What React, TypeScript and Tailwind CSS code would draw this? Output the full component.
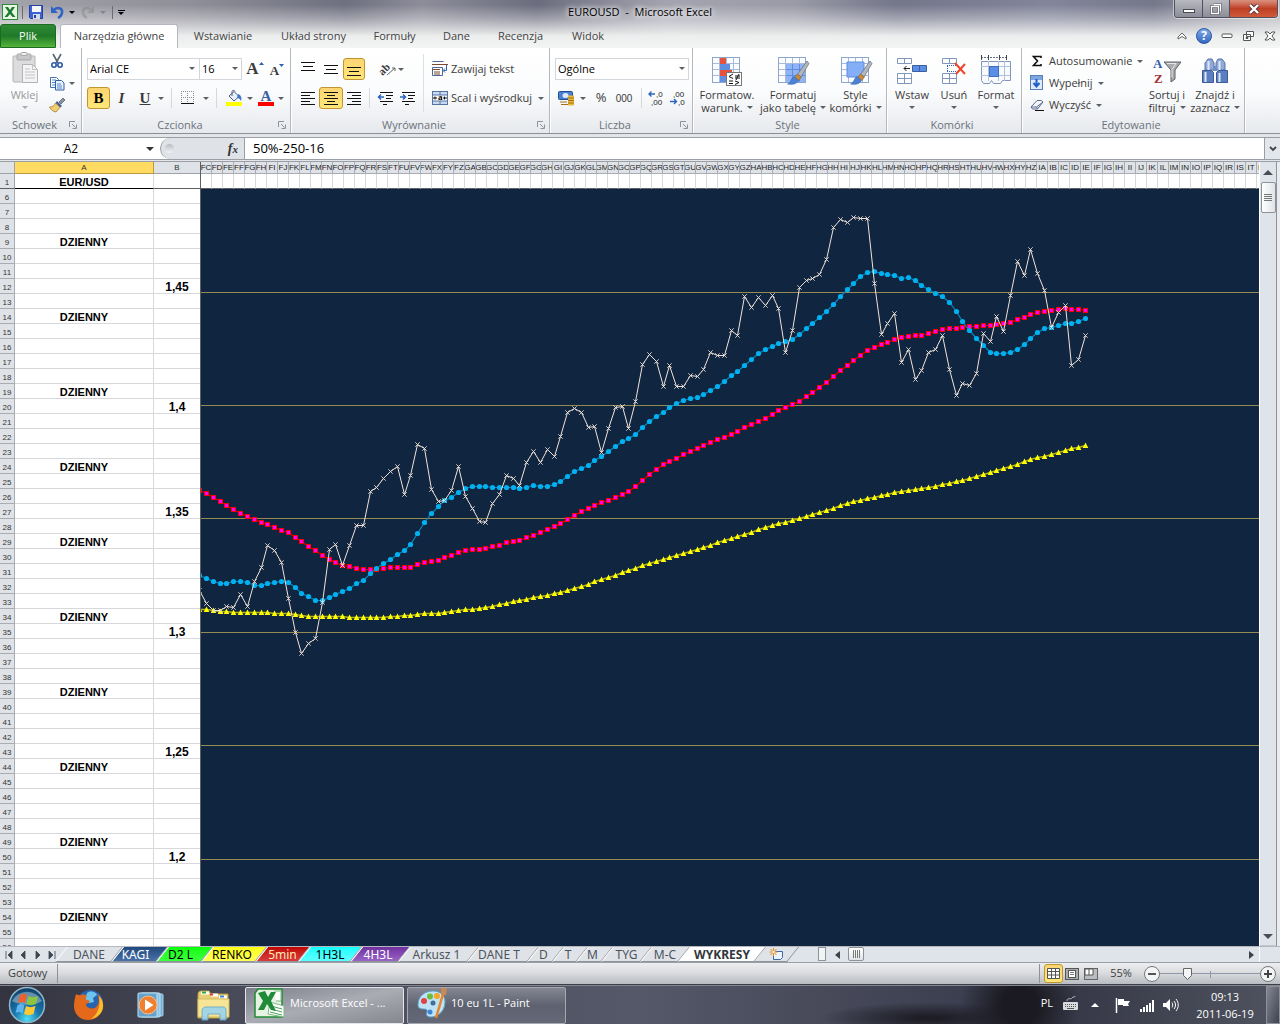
import React from "react";

type P = { children?: React.ReactNode; className?: string };

/* ---------- chart data ---------- */
const price = [
  590, 603, 610, 610, 606, 607, 594, 606, 581, 567, 545, 550, 562, 598, 632, 653, 643, 638, 602, 549, 544, 565, 545, 525, 525, 491, 487, 478, 471, 466, 494,
  475, 444, 448, 489, 501, 500, 490, 466, 496, 508, 521, 522, 503, 494, 475, 478, 485, 462, 451, 462, 449, 456, 436, 412, 408, 412, 427, 426, 452, 428, 407,
  406, 428, 401, 364, 354, 361, 386, 365, 386, 386, 375, 376, 369, 352, 355, 355, 330, 335, 296, 307, 297, 305, 295, 308, 352, 330, 287, 280, 278, 274, 259,
  227, 219, 222, 217, 218, 218, 283, 334, 323, 313, 362, 349, 379, 370, 352, 349, 335, 369, 395, 383, 385, 373, 333, 341, 316, 331, 295, 261, 275, 249, 273,
  290, 327, 312, 305, 365, 359, 335,
];
const fast = [
  575, 578, 581, 583, 583, 581, 581, 582, 585, 585, 583, 582, 581, 582, 587, 593, 596, 600, 600, 597, 594, 591, 588, 583, 580, 573, 568, 563, 559, 554, 550,
  544, 533, 522, 513, 506, 500, 497, 492, 488, 486, 486, 486, 487, 487, 487, 487, 488, 487, 485, 486, 486, 484, 481, 476, 471, 468, 465, 460, 456, 451, 446,
  441, 438, 434, 427, 421, 416, 412, 407, 403, 400, 398, 397, 394, 390, 386, 381, 375, 371, 365, 359, 353, 349, 346, 343, 341, 339, 334, 328, 323, 317, 311,
  304, 296, 289, 283, 276, 272, 271, 273, 274, 275, 278, 277, 280, 285, 289, 293, 296, 302, 311, 321, 330, 338, 345, 352, 353, 353, 352, 349, 344, 338, 332,
  328, 327, 325, 323, 323, 321, 318,
];
const medium = [
  490, 493, 497, 501, 505, 509, 513, 516, 519, 522, 524, 527, 530, 532, 537, 541, 546, 550, 555, 559, 562, 565, 566, 568, 569, 569, 569, 568, 567, 567, 567,
  567, 564, 562, 561, 560, 557, 555, 552, 550, 549, 549, 548, 546, 545, 542, 541, 540, 537, 535, 532, 529, 526, 523, 519, 515, 511, 508, 505, 502, 500, 497,
  494, 491, 486, 480, 474, 469, 464, 461, 458, 454, 451, 448, 445, 442, 439, 437, 434, 431, 427, 424, 421, 418, 414, 410, 407, 404, 401, 396, 392, 387, 382,
  376, 370, 365, 360, 355, 350, 347, 344, 342, 339, 337, 336, 335, 335, 333, 331, 329, 328, 328, 327, 326, 326, 325, 325, 324, 323, 322, 319, 317, 314, 312,
  311, 310, 309, 308, 309, 309, 310,
];
const slowKeys: [number, number][] = [
  [-1, 609], [0, 609], [1, 610], [3, 611], [5, 612], [8, 612], [12, 613], [14, 615], [16, 616], [20, 616], [21, 617], [25, 617], [27, 616], [30, 615],
  [32, 613], [34, 613], [37, 610], [40, 608], [42, 606], [45, 601], [50, 595], [54, 588], [63, 568], [64, 565], [67, 559], [70, 553], [73, 547], [76, 540],
  [79, 534], [82, 527], [84, 523], [86, 520], [90, 512], [94, 503], [97, 498], [102, 491], [107, 486], [112, 478], [117, 468], [119, 464], [120, 461],
  [122, 457], [124, 454], [126, 450], [129, 445],
];
const slow = price.map((_, i) => {
  const n = i - 1;
  const k = Math.max(1, slowKeys.findIndex(([x]) => x >= n));
  const [x0, y0] = slowKeys[k - 1];
  const [x1, y1] = slowKeys[k];
  return Math.round(y0 + ((n - x0) / (x1 - x0)) * (y1 - y0));
});
const px = (i: number) => Math.round(206 + (i - 1) * 6.814);
const line = (d: number[]) => d.map((y, i) => `${px(i) + 0.5},${y + 0.5}`).join(" ");

function Chart() {
  return (
    <svg className="block h-full w-full bg-[#10253f]" viewBox="201 189 1058 757" preserveAspectRatio="xMinYMin slice" role="img" aria-label="EUR/USD">
      {[292, 405, 518, 632, 745, 859].map((y) => (
        <rect key={y} x="201" y={y} width="1400" height="1" fill="#948a54" />
      ))}
      <polyline points={line(slow)} fill="none" stroke="#b5b51a" strokeWidth="1.4" />
      <path d={slow.map((y, i) => `M${px(i) - 2.3} ${y + 3}l2.8 -5.4l2.8 5.4z`).join("")} fill="#ffff00" />
      <polyline points={line(medium)} fill="none" stroke="#d00000" strokeWidth="1.2" />
      {medium.map((y, i) => (
        <g key={i}>
          <rect x={px(i) - 2} y={y - 2} width="5" height="5" fill="#ff0000" />
          <rect x={px(i) - 1} y={y - 1} width="3" height="3" fill="#ff00ff" />
        </g>
      ))}
      <polyline points={line(fast)} fill="none" stroke="#0a86bb" strokeWidth="1.2" />
      {fast.map((y, i) => (
        <circle key={i} cx={px(i) + 0.5} cy={y + 0.5} r="2.6" fill="#00b0f0" />
      ))}
      <polyline points={line(price)} fill="none" stroke="#f2e3da" strokeWidth="1" />
      <path d={price.map((y, i) => `M${px(i) - 1.7} ${y - 1.7}l4.4 4.4m0 -4.4l-4.4 4.4`).join("")} stroke="#e8dcd6" strokeWidth="0.9" />
    </svg>
  );
}

/* ---------- small parts ---------- */
function Down({ className = "" }: P) {
  return <span className={`inline-block h-0 w-0 shrink-0 border-x-[3px] border-t-[3px] border-x-transparent border-t-[#5c6066] ${className}`} />;
}
function Ico({ w = 16, h = 16, children, className = "" }: P & { w?: number; h?: number }) {
  return (
    <svg width={w} height={h} viewBox={`0 0 ${w} ${h}`} className={`shrink-0 overflow-visible ${className}`} aria-hidden="true">
      {children}
    </svg>
  );
}
function Launcher() {
  return (
    <Ico w={8} h={8}>
      <path d="M0.500 6V0.500H6M3 3l3.500 3.500M7.500 3.500v4h-4" fill="none" stroke="#8d939b" />
    </Ico>
  );
}
function Group({ label, launcher, className = "", children }: P & { label: string; launcher?: boolean }) {
  return (
    <section aria-label={label} className={`flex shrink-0 flex-col border-r border-[#b4b8be] shadow-[1px_0_0_white] ${className}`}>
      <div className="h-[69px]">{children}</div>
      <div className="flex h-4 items-center pr-1">
        <span className="flex-1 text-center text-[#6c727b]">{label}</span>
        {launcher && (
          <button aria-label={`${label} – opcje`}>
            <Launcher />
          </button>
        )}
      </div>
    </section>
  );
}
function Sep() {
  return <span className="h-5 w-px shrink-0 bg-[#d5d8dc]" />;
}
function B({ label, className = "", on, children }: P & { label: string; on?: boolean }) {
  return (
    <button
      aria-label={label}
      className={`flex h-[22px] shrink-0 items-center justify-center gap-1 ${on ? "rounded-[3px] border border-[#c2952f] bg-linear-to-b from-[#fbd573] to-[#ffe779]" : ""} ${className}`}
    >
      {children}
    </button>
  );
}
function Big({ icon, a, b, className = "" }: { icon: React.ReactNode; a: string; b?: string; className?: string }) {
  return (
    <button className={`flex shrink-0 flex-col items-center ${className}`}>
      <span className="flex h-[34px] items-center">{icon}</span>
      <span className="leading-[13px] whitespace-nowrap">{a}</span>
      <span className="flex h-[13px] items-center gap-1 leading-[13px] whitespace-nowrap">
        {b}
        <Down />
      </span>
    </button>
  );
}
function Lines({ rows, w = 14 }: { rows: [number, number, number][]; w?: number }) {
  return (
    <Ico w={w} h={14}>
      {rows.map(([x, y, l]) => (
        <rect key={y} x={x} y={y} width={l} height="1" fill="#111" />
      ))}
    </Ico>
  );
}
function Grid({ children }: P) {
  return (
    <Ico w={32} h={32}>
      <rect x="1.5" y="2.5" width="27" height="25" fill="#fafcff" stroke="#8fa6cc" />
      <path d="M8.5 3v24M15.5 3v24M22.5 3v24M2 8.5h26M2 14.5h26M2 20.5h26" stroke="#a9bbd8" />
      {children}
    </Ico>
  );
}
function Brush() {
  return (
    <g>
      <path d="M30 6L32 8.500L24 22L20.500 19.500z" fill="#b3b8bf" stroke="#666c76" strokeWidth="0.700" />
      <path d="M20.500 19l3.800 3l-2.300 3.500l-4.500-3z" fill="#c78a3a" stroke="#7e5322" strokeWidth="0.500" />
      <path d="M17 21.500l4.500 4c-2 3.500-6 4.500-11 3.500c3.500-1 3.500-6 6.500-7.500z" fill="#4b82d4" stroke="#2b5caa" strokeWidth="0.500" />
    </g>
  );
}

/* ---------- ribbon ---------- */
function Ribbon() {
  return (
    <div className="flex h-[86px] shrink-0 overflow-hidden border-b border-[#8b9097] bg-linear-to-b from-white via-[#fbfcfd] to-[#e6e9ed] text-[#3b3b3b]">
      <Group label="Schowek" launcher className="w-[82px]">
        <div className="flex">
          <button className="ml-2 flex w-[33px] flex-col items-center pt-1 text-[#9a9a9a]">
            <Ico w={30} h={32}>
              <rect x="3" y="4" width="22" height="26" rx="1" fill="#dcdcde" stroke="#b3b3b6" />
              <rect x="7" y="2" width="14" height="6" rx="1" fill="#c6c6c9" stroke="#a8a8ab" />
              <rect x="11" y="0.500" width="6" height="3" rx="1" fill="#eee" stroke="#a8a8ab" />
              <path d="M12.500 12.500h10l5 5v13h-15z" fill="#f4f4f6" stroke="#b3b3b6" />
              <path d="M22.500 12.500v5h5M15 17h5M15 20h10M15 23h10M15 26h10" fill="none" stroke="#c3c3c8" />
            </Ico>
            <span className="mt-1 leading-[14px]">Wklej</span>
            <Down className="mt-1 opacity-50" />
          </button>
          <div className="ml-2 flex flex-col">
            <B label="Wytnij" className="mt-[2px] w-4">
              <Ico w={14} h={16}>
                <path d="M3 1l5 9M11 1L6 10" stroke="#5a6577" strokeWidth="1.600" />
                <circle cx="4" cy="12" r="2.200" fill="none" stroke="#2b58a8" strokeWidth="1.600" />
                <circle cx="10" cy="12" r="2.200" fill="none" stroke="#2b58a8" strokeWidth="1.600" />
              </Ico>
            </B>
            <B label="Kopiuj">
              <Ico>
                <path d="M1.500 2.500h6l2 2v8h-8z" fill="#fff" stroke="#4470ad" />
                <path d="M6.500 5.500h6l2.500 2.500v7h-8.500z" fill="#eaf2fd" stroke="#2f5f9f" />
                <path d="M3 5h4M3 7.500h3M3 10h3M8 9h4M8 11h5M8 13h5" stroke="#4c86cf" />
              </Ico>
              <Down />
            </B>
            <B label="Malarz formatów" className="w-4">
              <Ico>
                <path d="M10 5l4-4l2 2l-4 4z" fill="#8b94a6" stroke="#4b5466" strokeWidth="0.700" />
                <path d="M8 4l5 5l-2 1.500l-4.500-4.500z" fill="#3f5f94" />
                <path d="M6.500 6l4.500 4.500l-4 4.500c-3-0.500-5-2-6.500-5c3 0 5-1.500 6-4z" fill="#f0cf70" stroke="#9a7322" strokeWidth="0.700" />
              </Ico>
            </B>
          </div>
        </div>
      </Group>

      <Group label="Czcionka" launcher className="w-[209px]">
        <div className="flex pt-[10px] pl-[5px]">
          <div className="relative">
            <select aria-label="Czcionka" className="h-[22px] w-[113px] appearance-none border border-[#d3d6da] bg-white px-[2px] text-black">
              <option>Arial CE</option>
            </select>
            <Down className="pointer-events-none absolute top-[9px] right-[5px]" />
          </div>
          <div className="relative -ml-px">
            <select aria-label="Rozmiar czcionki" className="h-[22px] w-[43px] appearance-none border border-[#d3d6da] bg-white px-[2px] text-black">
              <option>16</option>
            </select>
            <Down className="pointer-events-none absolute top-[9px] right-1" />
          </div>
          <B label="Zwiększ rozmiar czcionki" className="ml-1 w-[18px] !gap-0 font-['Liberation_Serif'] text-[17px] font-bold">
            A
            <Ico w={5} h={14}><path d="M0 3l2.500-3l2.500 3z" fill="#2d5fb0" /></Ico>
          </B>
          <B label="Zmniejsz rozmiar czcionki" className="ml-1 w-[18px] !gap-0 pt-1 font-['Liberation_Serif'] text-[13px] font-bold">
            A
            <Ico w={5} h={14}><path d="M0 0h5l-2.500 3z" fill="#2d5fb0" /></Ico>
          </B>
        </div>
        <div className="flex items-center pt-[7px] pl-[5px] font-['Liberation_Serif'] text-[15px]">
          <B label="Pogrubienie" on className="w-[23px] font-bold text-black">B</B>
          <B label="Kursywa" className="w-[23px] font-bold italic">I</B>
          <B label="Podkreślenie" className="w-[34px] !gap-2 pl-1">
            <span className="font-bold underline">U</span>
            <Down />
          </B>
          <span className="ml-1" />
          <Sep />
          <B label="Obramowanie" className="ml-[9px] w-[28px] !gap-2">
            <Ico w={14} h={14}>
              <path d="M0.500 0v13M6.500 0v13M12.500 0v13M0 0.500h13M0 6.500h13" fill="none" stroke="#8a8a8a" strokeDasharray="1 1" />
              <rect y="12" width="13" height="1" fill="#111" />
            </Ico>
            <Down />
          </B>
          <span className="ml-[7px]" />
          <Sep />
          <B label="Kolor wypełnienia" className="ml-2 w-[28px]">
            <Ico w={17} h={16}>
              <path d="M3 6l5-4.500l5 5l-5 4.500z" fill="#e9f0fa" stroke="#4a5f83" />
              <path d="M6 6V1.500c0-1.500 3-1.500 3 0" fill="none" stroke="#4a5f83" />
              <path d="M12 4c3 1 4 4 3 7c-1-2-2-3-4-3z" fill="#3f73c4" />
              <rect x="0" y="12" width="16" height="4" fill="#ff0" />
            </Ico>
            <Down />
          </B>
          <B label="Kolor czcionki" className="ml-1 w-[28px]">
            <span className="flex w-4 flex-col items-center border-b-4 border-[#f00] text-[15px] leading-3 font-bold text-[#3a5f9f]">A</span>
            <Down />
          </B>
        </div>
      </Group>

      <Group label="Wyrównanie" launcher className="w-[259px]">
        <div className="flex">
          <div className="w-[132px] shrink-0">
            <div className="flex items-center pt-[10px] pl-[6px]">
              <B label="Do góry" className="w-[22px]"><Lines rows={[[0, 0, 14], [2, 4, 10], [0, 8, 14]]} /></B>
              <B label="Do środka" className="w-[24px]"><Lines rows={[[0, 3, 14], [2, 7, 10], [0, 11, 14]]} /></B>
              <B label="Do dołu" on className="w-[22px]"><Lines rows={[[0, 5, 14], [2, 9, 10], [0, 13, 14]]} /></B>
              <B label="Orientacja" className="ml-[14px] w-[24px] !gap-0.5">
                <span className="-rotate-45 font-['Liberation_Serif'] text-[11px] leading-3 font-bold">ab</span>
                <Ico w={5} h={14}><path d="M-4 13L4 6M4 6h-3M4 6v3" stroke="#666" fill="none" /></Ico>
                <Down />
              </B>
            </div>
            <div className="flex items-center pt-[7px] pl-[6px]">
              <B label="Do lewej" className="w-[22px]"><Lines rows={[[0, 1, 14], [0, 4, 9], [0, 7, 14], [0, 10, 9], [0, 13, 14]]} /></B>
              <B label="Wyśrodkuj" on className="w-[24px]"><Lines rows={[[0, 1, 14], [3, 4, 8], [0, 7, 14], [3, 10, 8], [0, 13, 14]]} /></B>
              <B label="Do prawej" className="w-[22px]"><Lines rows={[[0, 1, 14], [5, 4, 9], [0, 7, 14], [5, 10, 9], [0, 13, 14]]} /></B>
              <span className="ml-1" />
              <Sep />
              <B label="Zmniejsz wcięcie" className="ml-[5px] w-[22px]">
                <Ico><path d="M2 2.500h13M8 5.500h7M8 8.500h5M2 11.500h13M5 14.500h4" stroke="#111" /><path d="M6 7H0.500M3 4.500L0.500 7l2.500 2.500" stroke="#2d66c0" fill="none" strokeWidth="1.500" /></Ico>
              </B>
              <B label="Zwiększ wcięcie" className="w-[22px]">
                <Ico><path d="M2 2.500h13M8 5.500h7M8 8.500h5M2 11.500h13M5 14.500h4" stroke="#111" /><path d="M0 7h5.500M3 4.500L5.500 7L3 9.500" stroke="#2d66c0" fill="none" strokeWidth="1.500" /></Ico>
              </B>
            </div>
          </div>
          <div className="mt-[6px] h-[58px] w-px bg-[#dcdfe3]" />
          <div className="flex flex-col items-start gap-[7px] pt-[10px] pl-2">
            <B label="Zawijaj tekst" className="!gap-[3px]">
              <Ico>
                <path d="M0 3.500h16M0 8.500h8M2 11h6M2 13h6" stroke="#7a4a2a" />
                <path d="M0.500 0.500h11M0.500 6.500h10v8h-10z" stroke="#4a6797" fill="none" />
                <path d="M14.500 4v5.500h-3M13 7.500l-2 2l2 2" stroke="#3567b1" fill="none" />
              </Ico>
              Zawijaj tekst
            </B>
            <B label="Scal i wyśrodkuj" className="!gap-[3px]">
              <Ico>
                <rect x="0.500" y="1.500" width="15" height="13" fill="#c9daf2" stroke="#56749f" />
                <rect x="1" y="5" width="14" height="6" fill="#fff" />
                <path d="M8 2v3M8 11v3M0 5h16M0 11h16" stroke="#56749f" />
                <text x="6" y="10" fontSize="9" fontWeight="bold" fontFamily="Liberation Serif">a</text>
                <path d="M1 8h4M3 6.500v3M11 8h4M12.500 6.500v3" stroke="#111" />
              </Ico>
              Scal i wyśrodkuj
              <Down className="ml-[3px]" />
            </B>
          </div>
        </div>
      </Group>

      <Group label="Liczba" launcher className="w-[143px]">
        <div className="pt-[10px] pl-[5px]">
          <div className="relative w-[134px]">
            <select aria-label="Format liczb" className="h-[22px] w-full appearance-none border border-[#d3d6da] bg-white px-[2px] text-black">
              <option>Ogólne</option>
            </select>
            <Down className="pointer-events-none absolute top-[9px] right-1" />
          </div>
          <div className="flex items-center pt-[7px]">
            <B label="Format księgowy" className="ml-[3px] !gap-[5px]">
              <Ico w={17} h={16}>
                <rect x="0.500" y="1.500" width="14" height="8" rx="1" fill="#4b7fd0" stroke="#224e97" />
                <ellipse cx="7.500" cy="5.500" rx="3" ry="2.500" fill="#dfeafa" />
                <path d="M10 5.500h6v10h-6z" fill="#e8b93b" />
                <path d="M10 8h6M10 10.500h6M10 13h6M2 12h7M3 14.500h7" stroke="#a4711b" />
              </Ico>
              <Down />
            </B>
            <B label="Zapis procentowy" className="ml-1 w-[22px] text-[13px]">%</B>
            <B label="Zapis dziesiętny" className="w-[24px]"><span className="font-['Liberation_Sans'] text-[10px]">000</span></B>
            <span className="ml-[5px]" />
            <Sep />
            <B label="Zwiększ dziesiętne" className="ml-[3px] w-[22px]">
              <Ico w={16} h={16} className="font-['Liberation_Sans'] text-[8px]">
                <text x="8" y="7" fill="#222">,0</text><text x="3" y="15" fill="#222">,00</text>
                <path d="M7 4H1M3.500 1.500L1 4l2.500 2.500" stroke="#2d66c0" fill="none" strokeWidth="1.400" />
              </Ico>
            </B>
            <B label="Zmniejsz dziesiętne" className="w-[22px]">
              <Ico w={16} h={16} className="font-['Liberation_Sans'] text-[8px]">
                <text x="3" y="7" fill="#222">,00</text><text x="8" y="15" fill="#222">,0</text>
                <path d="M0 11.500h6M4 9l2.500 2.500L4 14" stroke="#2d66c0" fill="none" strokeWidth="1.400" />
              </Ico>
            </B>
          </div>
        </div>
      </Group>

      <Group label="Style" className="w-[194px]">
        <div className="flex pt-[6px]">
          <Big
            className="w-[68px]"
            a="Formatow."
            b="warunk."
            icon={
              <Grid>
                <rect x="9" y="3" width="6" height="6" fill="#e8523c" />
                <rect x="9" y="9" width="10" height="6" fill="#5f8fe0" />
                <rect x="9" y="15" width="12" height="6" fill="#e8523c" />
                <rect x="9" y="21" width="6" height="6" fill="#5f8fe0" />
                <rect x="15.500" y="17.500" width="15" height="13" fill="#fff" stroke="#777" />
                <path d="M22 19l-4 2.500l4 2M18 26h4M18 28.500h4M24 21h5M24 23h5M28 19l-3 6M24 26l4 1.500l-4 2" stroke="#111" fill="none" />
              </Grid>
            }
          />
          <Big className="w-[64px]" a="Formatuj" b="jako tabelę" icon={<Grid><path d="M9 9h19v18H9z" fill="#8eb4f5" /><path d="M15.500 9v18M22.500 9v18M9 14.500h19M9 20.500h19" stroke="#5d8de0" /><Brush /></Grid>} />
          <Big className="w-[61px]" a="Style" b="komórki" icon={<Grid><path d="M7 7h17v15H7z" fill="#84aef5" stroke="#5d8de0" /><Brush /></Grid>} />
        </div>
      </Group>

      <Group label="Komórki" className="w-[135px]">
        <div className="flex pt-[6px] pl-1">
          <Big
            className="w-[42px]"
            a="Wstaw"
            icon={
              <Ico w={32} h={30}>
                <path d="M1.500 2.500h14v5h-14zM8.500 2.500v5M1.500 17.500h14v10h-14zM8.500 17.500v10M1.500 22.500h14" fill="#fff" stroke="#8196bb" />
                <path d="M16.500 9.500h14v6h-14z" fill="#5b8ee6" stroke="#3a5f9f" /><path d="M23.500 10v5" stroke="#3a5f9f" />
                <path d="M14 12.500H8M10.500 10L8 12.500l2.500 2.500" stroke="#222" fill="none" />
              </Ico>
            }
          />
          <Big
            className="w-[42px]"
            a="Usuń"
            icon={
              <Ico w={30} h={30}>
                <path d="M3.500 2.500h14v5h-14zM10.500 2.500v5M3.500 17.500h14v10h-14zM10.500 17.500v10M3.500 22.500h14" fill="#fff" stroke="#8196bb" />
                <path d="M8 9.500h9M8 15.500h9M8.500 10v5" stroke="#2f62b5" strokeDasharray="1 1" />
                <path d="M16 7l10 11M26 8L17 18" stroke="#f0442e" strokeWidth="2" />
              </Ico>
            }
          />
          <Big
            className="w-[42px]"
            a="Format"
            icon={
              <Ico w={32} h={32}>
                <path d="M1 2.500h26" stroke="#5b6b85" strokeDasharray="2 1" /><path d="M1.500 0v5M8.500 0v5M19.500 0v5M26.500 0v5" stroke="#444" />
                <path d="M1.500 6.500h29v19h-8l-2 3h-7l-2-3l-2 3h-6l-2-3z" fill="#f8fafe" stroke="#8196bb" />
                <path d="M8.500 6v20M18.500 6v20M24.500 6v20M1 11.500h29M1 20.500h29" stroke="#b2c1da" />
                <rect x="9.500" y="11.500" width="9" height="10" fill="#5a8fe8" stroke="#3f6fc0" />
              </Ico>
            }
          />
        </div>
      </Group>

      <Group label="Edytowanie" className="w-[223px]">
        <div className="flex">
          <div className="flex w-[122px] shrink-0 flex-col items-start pt-[2px] pl-2">
            <B label="Autosumowanie" className="!gap-[5px]">
              <Ico w={14} h={14}><path d="M11 4V2.500H3.500L7.500 7l-4 4.500H11V10" fill="none" stroke="#111" strokeWidth="1.600" /></Ico>
              Autosumowanie <Down />
            </B>
            <B label="Wypełnij" className="!gap-[5px]">
              <Ico w={14} h={16}>
                <rect x="0.500" y="0.500" width="12" height="14" fill="#dfe9f8" stroke="#5a7fb9" />
                <rect x="1" y="1" width="11" height="4" fill="#7da5e4" />
                <path d="M6.500 4v7M3.500 8l3 3.500l3-3.500" stroke="#1f5fc8" strokeWidth="2" fill="none" />
              </Ico>
              Wypełnij <Down />
            </B>
            <B label="Wyczyść" className="!gap-[5px]">
              <Ico w={14} h={14}>
                <path d="M1 9L7 2.500h4.500L13 4L7.500 11h-5z" fill="#f3f5fa" stroke="#596a8d" />
                <path d="M1 9h5.500L13 4M6.500 9l1 2" stroke="#596a8d" fill="none" />
                <rect x="5" y="12" width="9" height="1" fill="#111" />
              </Ico>
              Wyczyść <Down />
            </B>
          </div>
          <Big
            className="w-[46px] pt-[6px]"
            a="Sortuj i"
            b="filtruj"
            icon={
              <Ico w={30} h={30}>
                <path d="M12 6h17l-6 8v9l-4 3V14z" fill="#a9abae" stroke="#5e6064" /><path d="M15 7.500h9l-4 6v8" stroke="#e4e5e7" fill="none" />
                <text x="1" y="12" fontSize="13" fontWeight="bold" fontFamily="Liberation Serif" fill="#2f5cab">A</text>
                <text x="2" y="27" fontSize="13" fontWeight="bold" fontFamily="Liberation Serif" fill="#a92f2f">Z</text>
              </Ico>
            }
          />
          <Big
            className="w-[50px] pt-[6px]"
            a="Znajdź i"
            b="zaznacz"
            icon={
              <Ico w={28} h={30}>
                <path d="M7 3h4l2 4v7H4V7zM17 3h4l3 4v7h-9V7z" fill="#8faad8" stroke="#5571a8" />
                <path d="M1.500 14.500h9l2 2v10h-11zM17.500 14.500h9v12h-11v-10z" fill="#5b7fc0" stroke="#3d5a96" />
                <path d="M12 10h4v5h-4z" fill="#6f8fc8" />
                <path d="M4.500 16v10M18.500 17v9M7.500 5v9M18.500 5v9" stroke="#dce7fa" strokeWidth="2" />
              </Ico>
            }
          />
        </div>
      </Group>
    </div>
  );
}

/* ---------- sheet ---------- */
const letters = "ABCDEFGHIJKLMNOPQRSTUVWXYZ".split("");
const cols = [
  ...letters.slice(2).map((l) => "F" + l),
  ...letters.map((l) => "G" + l),
  ...letters.map((l) => "H" + l),
  ...letters.slice(0, 21).map((l) => "I" + l),
];
const rows = Array.from({ length: 51 }, (_, i) => i + 6);
const scale: Record<number, string> = { 12: "1,45", 20: "1,4", 27: "1,35", 35: "1,3", 43: "1,25", 50: "1,2" };

function Sheet() {
  return (
    <div className="flex min-h-0 flex-1 overflow-hidden bg-[#dfe3e8] font-['Liberation_Sans',sans-serif]">
      <div className="w-[201px] shrink-0 overflow-hidden border-r border-[#5c5f63]">
        <table className="w-[200px] table-fixed border-separate border-spacing-0 bg-white text-[12px] leading-3 text-black">
          <colgroup>
            <col className="w-[15px]" />
            <col className="w-[139px]" />
            <col className="w-[46px]" />
          </colgroup>
          <thead>
            <tr className="h-[12px] text-[8px] leading-[10px]">
              <th className="h-[12px] border-r border-b border-[#9ea3aa] bg-[#dfe3e8] p-0" />
              <th className="border-r border-b border-[#c09a3f] bg-[#ffdb61] p-0 pt-px font-normal text-[#333]">A</th>
              <th className="border-b border-[#9ea3aa] bg-[#dfe3e8] p-0 pt-px font-normal text-[#333]">B</th>
            </tr>
          </thead>
          <tbody>
            <tr className="h-[15px]">
              <th className="h-[15px] border-r border-b border-r-[#9ea3aa] border-b-[#5c5f63] bg-[#dfe3e8] p-0 pt-1 text-[8px] leading-[10px] font-normal text-[#333]">1</th>
              <td className="border-r border-b border-r-[#d6d8db] border-b-black p-0 pt-px text-center text-[11px] font-bold">EUR/USD</td>
              <td className="border-b border-[#5c5f63] p-0" />
            </tr>
            {rows.map((r) => (
              <tr key={r} className="h-[15px]">
                <th className="h-[15px] border-r border-b border-[#a8adb4] bg-[#dfe3e8] p-0 pt-1 text-[8px] leading-[10px] font-normal text-[#333]">{r}</th>
                <td className="border-r border-b border-[#d6d8db] p-0 pt-px text-center text-[11px] font-bold">{r % 5 === 4 ? "DZIENNY" : ""}</td>
                <td className="border-b border-[#d6d8db] p-0 pt-[2px] text-center font-bold">{scale[r] ?? ""}</td>
              </tr>
            ))}
          </tbody>
        </table>
      </div>
      <div className="flex min-w-0 flex-1 flex-col overflow-hidden">
        <table className="w-[1067px] shrink-0 table-fixed border-separate border-spacing-0 text-[8px] leading-[10px]">
          <thead>
            <tr>
              {cols.map((c) => (
                <th key={c} className="h-[12px] w-[11px] overflow-hidden border-r border-b border-[#a8adb4] bg-[#dfe3e8] p-0 pt-px font-normal text-[#222]">
                  <span className="flex justify-center">{c}</span>
                </th>
              ))}
            </tr>
          </thead>
          <tbody>
            <tr>
              {cols.map((c) => (
                <td key={c} className="h-[15px] border-r border-b border-r-[#d6d8db] border-b-[#5c5f63] bg-white p-0" />
              ))}
            </tr>
          </tbody>
        </table>
        <div className="min-h-0 flex-1">
          <Chart />
        </div>
      </div>
      <div className="flex w-[17px] shrink-0 flex-col items-center border-l border-white bg-[#dfe3ea]">
        <button aria-label="Przewiń w górę" className="flex h-[20px] w-4 items-center justify-center">
          <span className="border-x-[5px] border-b-[5px] border-x-transparent border-b-[#4b4f55]" />
        </button>
        <div className="flex h-[31px] w-[15px] flex-col items-center justify-center gap-px rounded-[2px] border border-[#8d9299] bg-linear-to-r from-white to-[#dfe3e8]">
          <span className="h-px w-2 bg-[#777]" />
          <span className="h-px w-2 bg-[#777]" />
          <span className="h-px w-2 bg-[#777]" />
          <span className="h-px w-2 bg-[#777]" />
        </div>
        <span className="flex-1" />
        <button aria-label="Przewiń w dół" className="flex h-[18px] w-4 items-center justify-center border-b border-[#c3c7cd]">
          <span className="border-x-[5px] border-t-[5px] border-x-transparent border-t-[#4b4f55]" />
        </button>
      </div>
      <div className="w-1 shrink-0 border-l border-[#8d9299] bg-[#e9ebee]" />
    </div>
  );
}

const tabs: { name: string; box: string; fill: string }[] = [
  { name: "DANE", box: "w-[56px] text-[#4c535c]", fill: "bg-[#dfe3e8]" },
  { name: "KAGI", box: "w-[45px] pr-2 text-white", fill: "bg-linear-to-b from-[#1f497d] to-[#4a72a8]" },
  { name: "D2 L", box: "w-[45px] pr-2 text-black", fill: "bg-linear-to-b from-[#00ff00] to-[#3cff3c]" },
  { name: "RENKO", box: "w-[54px] pr-1 text-black", fill: "bg-linear-to-b from-[#ffff00] to-[#ffff55]" },
  { name: "5min", box: "w-[43px] text-[#ffe9b0]", fill: "bg-linear-to-b from-[#c00000] to-[#d83a3a]" },
  { name: "1H3L", box: "w-[52px] text-black", fill: "bg-linear-to-b from-[#00ffff] to-[#5cffff]" },
  { name: "4H3L", box: "w-[48px] pr-1 text-white", fill: "bg-linear-to-b from-[#7030a0] to-[#9a63c4]" },
  { name: "Arkusz 1", box: "w-[69px] pr-1 text-[#4c535c]", fill: "bg-[#dfe3e8]" },
  { name: "DANE T", box: "w-[60px] pr-2 text-[#4c535c]", fill: "bg-[#dfe3e8]" },
  { name: "D", box: "w-[25px] pr-1 text-[#4c535c]", fill: "bg-[#dfe3e8]" },
  { name: "T", box: "w-[24px] pr-1 text-[#4c535c]", fill: "bg-[#dfe3e8]" },
  { name: "M", box: "w-[25px] pr-1 text-[#4c535c]", fill: "bg-[#dfe3e8]" },
  { name: "TYG", box: "w-[39px] text-[#4c535c]", fill: "bg-[#dfe3e8]" },
  { name: "M-C", box: "w-[38px] text-[#4c535c]", fill: "bg-[#dfe3e8]" },
  { name: "WYKRESY", box: "w-[76px] font-bold text-[#33373c]", fill: "bg-white" },
];

function SheetTabs() {
  return (
    <div className="flex h-[17px] shrink-0 items-stretch overflow-hidden border-t border-b border-t-[#b4b8be] border-b-[#9aa0a8] bg-[#dfe3ea]">
      <div className="flex w-[61px] shrink-0 items-center justify-around px-0.5">
        {["M2 1v8M8 1v8L4 5z", "M7 1v8L3 5z", "M3 1v8L7 5z", "M8 1v8M2 1v8L6 5z"].map((d, i) => (
          <button key={i} aria-label={["Pierwszy", "Poprzedni", "Następny", "Ostatni"][i]}>
            <Ico w={10} h={10}><path d={d} fill="#3e4650" stroke="#3e4650" strokeWidth="0.800" /></Ico>
          </button>
        ))}
      </div>
      <div className="flex shrink-0 font-['Noto_Sans',sans-serif] text-[12px] leading-[15px]">
        {tabs.map((t) => (
          <button key={t.name} className={`relative isolate shrink-0 ${t.box}`}>
            <span className={`absolute inset-0 -z-10 -skew-x-[39deg] border-r border-b border-l border-l-white border-r-[#8d939b] border-b-[#8d939b] ${t.fill}`} />
            {t.name}
          </button>
        ))}
        <button aria-label="Wstaw arkusz" className="relative isolate flex w-[33px] items-center justify-center">
          <span className="absolute inset-0 -z-10 -skew-x-[39deg] border-r border-b border-[#8d939b] bg-[#dfe3e8]" />
          <Ico w={15} h={14}>
            <path d="M6.500 3.500h7v6l-2 2h-7v-4" fill="#eef4fc" stroke="#3c66ab" />
            <path d="M4.500 0v8M0.500 4h8M1.500 1l6 6M7.500 1l-6 6" stroke="#e08a22" />
            <circle cx="4.500" cy="4" r="1.200" fill="#fff4c0" />
          </Ico>
        </button>
      </div>
      <span className="w-[25px] shrink-0" />
      <span className="h-[14px] w-2 shrink-0 border border-[#8d939b] bg-[#f1f3f5]" />
      <button aria-label="Przewiń w lewo" className="flex w-[22px] shrink-0 items-center justify-center">
        <span className="border-y-4 border-r-[5px] border-y-transparent border-r-[#3e4248]" />
      </button>
      <div className="flex h-[14px] w-4 shrink-0 items-center justify-center gap-px rounded-[2px] border border-[#8d9299] bg-linear-to-b from-white to-[#e0e3e8]">
        <span className="h-2 w-px bg-[#777]" />
        <span className="h-2 w-px bg-[#777]" />
        <span className="h-2 w-px bg-[#777]" />
        <span className="h-2 w-px bg-[#777]" />
      </div>
      <span className="flex-1" />
      <button aria-label="Przewiń w prawo" className="flex w-[16px] items-center justify-center">
        <span className="border-y-4 border-l-[5px] border-y-transparent border-l-[#3e4248]" />
      </button>
      <span className="w-[21px] border-l border-white" />
    </div>
  );
}

function StatusBar() {
  return (
    <div className="flex h-[22px] shrink-0 items-center border-b border-[#3c3f47] bg-linear-to-b from-[#eceef0] via-[#d8dadd] to-[#b9bcc1] text-[#3b3b3b]">
      <span className="w-[57px] pl-2">Gotowy</span>
      <span className="h-[19px] w-px bg-[#8d9299]" />
      <span className="flex-1" />
      <span className="h-[19px] w-px bg-[#8d9299]" />
      <button aria-label="Normalny" className="ml-1 flex h-[19px] w-[19px] items-center justify-center rounded-[3px] border border-[#c2952f] bg-linear-to-b from-[#fbd573] to-[#ffe779]">
        <Ico w={13} h={11}><path d="M0.500 0.500h12v10h-12zM4.500 0v11M8.500 0v11M0 3.500h13M0 7h13" fill="#fff" stroke="#555" /></Ico>
      </button>
      <button aria-label="Układ strony" className="ml-[2px]">
        <Ico w={14} h={12}><rect x="0.500" y="0.500" width="13" height="11" fill="#a9acb0" stroke="#555" /><rect x="3.500" y="2.500" width="7" height="7" fill="#fff" stroke="#555" /><path d="M5 4.500h4M5 6.500h4" stroke="#777" /></Ico>
      </button>
      <button aria-label="Podgląd podziału stron" className="ml-[5px]">
        <Ico w={14} h={12}><rect x="0.500" y="0.500" width="13" height="11" fill="#b9bcc1" stroke="#666" /><path d="M1 1h8v6H1z" fill="#fff" stroke="#555" /><path d="M5 1v6" stroke="#555" /></Ico>
      </button>
      <span className="w-[46px] text-center">55%</span>
      <button aria-label="Pomniejsz" className="flex h-4 w-4 items-center justify-center rounded-full border border-[#777] bg-[#f3f4f5]">
        <span className="h-[2px] w-2 bg-[#555]" />
      </button>
      <label className="relative flex h-4 w-[100px] items-center">
        <input type="range" aria-label="Powiększenie" defaultValue={27} className="absolute inset-0 opacity-0" />
        <span className="h-px flex-1 bg-[#8d99aa]" />
        <span className="absolute top-[5px] left-[50px] h-[7px] w-px bg-[#8d99aa]" />
        <Ico w={9} h={12} className="absolute top-[2px] left-[23px]"><path d="M0.500 0.500h8v7l-4 4l-4-4z" fill="#f3f4f5" stroke="#666" /></Ico>
      </label>
      <button aria-label="Powiększ" className="mr-1 flex h-4 w-4 items-center justify-center rounded-full border border-[#777] bg-[#f3f4f5]">
        <Ico w={8} h={8}><path d="M0 4h8M4 0v8" stroke="#444" strokeWidth="2" /></Ico>
      </button>
    </div>
  );
}

/* ---------- taskbar ---------- */
function Taskbar() {
  return (
    <div className="flex h-[39px] shrink-0 items-center overflow-hidden border-t border-[#82858f] bg-[radial-gradient(ellipse_60px_60px_at_1020px_20px,#1b1a22_30%,transparent_100%),radial-gradient(ellipse_110px_16px_at_930px_32px,#1e1d26_10%,transparent_100%),linear-gradient(90deg,#33343f,#4a4c5b_20%,#555868_50%,#474959_65%,#3c3f50_75%,#383a49_85%,#50535f)] text-[11px] text-white">
      <button aria-label="Start" className="ml-2">
        <Ico w={38} h={38}>
          <defs>
            <radialGradient id="orb" cx="0.5" cy="0.9" r="0.9"><stop offset="0" stopColor="#4fe0f7" /><stop offset="0.4" stopColor="#1878ae" /><stop offset="1" stopColor="#123d66" /></radialGradient>
          </defs>
          <circle cx="19" cy="19" r="17.500" fill="url(#orb)" stroke="#8db4c8" strokeWidth="1.500" />
          <path d="M4 15a16 14 0 0 1 30 0c-8 5-20 5-30 0z" fill="#ffffff" opacity="0.350" />
          <path d="M12 9c3-1.500 4-1.500 7 0l-2 8c-3-1.500-4-1.500-7 0z" fill="#f0602b" />
          <path d="M20.500 10c3 1.500 6 1.500 9.500 0l-2 8c-3.500 1.500-6.500 1.500-9.500 0z" fill="#8cc63f" />
          <path d="M9.500 19c3-1.500 4-1.500 7 0l-2 8c-3-1.500-4-1.500-7 0z" fill="#5fb3ee" />
          <path d="M18 20c3 1.500 6 1.500 9.500 0l-2 8c-3.500 1.500-6.500 1.500-9.500 0z" fill="#fcc934" />
        </Ico>
      </button>
      <button aria-label="Firefox" className="ml-[27px]">
        <Ico w={32} h={32}>
          <circle cx="17" cy="14" r="13" fill="#2a63ad" />
          <path d="M14 4c4-3 9-1 10 2l-4 3l1 4l-5 1l-4-4z" fill="#6cc3ee" />
          <path d="M3 5c1 1 3 1.500 5 1c3-1 5 0 6 1c-2 1-2 3 0 4l3 1c-1 2-4 2-4 4c1 4 8 5 11 1c3-4 2-9 0-12c5 3 7 9 6 14c-2 8-8 12-15 12C7 31 1 25 1 17C1 12 2 9 3 5z" fill="#e4691b" />
          <path d="M26 7c4 4 5 10 3 15c-2 4-6 7-11 8c6-4 10-12 8-23z" fill="#f9c02f" />
        </Ico>
      </button>
      <button aria-label="Windows Media Player" className="ml-8">
        <Ico w={28} h={28}>
          <rect x="7" y="3" width="19" height="22" rx="1" fill="#74afd4" stroke="#a7d2ea" />
          <rect x="4" y="2" width="19" height="24" rx="1" fill="#8dc3e2" stroke="#bfe2f3" />
          <rect x="1" y="2" width="19" height="24" rx="1" fill="#62a2cc" stroke="#bfe2f3" />
          <circle cx="11" cy="14" r="9" fill="#f08030" stroke="#f8c090" />
          <path d="M8 8.500v11l8.500-5.500z" fill="#fff" />
        </Ico>
      </button>
      <button aria-label="Eksplorator Windows" className="ml-8">
        <Ico w={34} h={32}>
          <path d="M1 6c0-3 1-4 3-4h8l2 3h17v24H1z" fill="#e9cf74" stroke="#b89b43" />
          <path d="M4 4h8M14 6h7M22 8h8" stroke="#fff" strokeWidth="3" />
          <path d="M5 3.500h4" stroke="#2ea82e" strokeWidth="2" /><path d="M13 5.500h3" stroke="#d43a2a" strokeWidth="2" /><path d="M23 7.500h4" stroke="#3c86d4" strokeWidth="2" />
          <path d="M1 10h31v18H1z" fill="#f6e596" stroke="#d6bd62" />
          <path d="M5 31v-9c0-3 2-4 4-4h17c2 0 3 1 3 4v9h-6v-6H11v6z" fill="#9bd4ee" stroke="#6aa9cb" opacity="0.900" />
        </Ico>
      </button>
      <button className="ml-[14px] flex h-[37px] w-[159px] items-center gap-1 rounded-[2px] border border-[#e3e5e8] bg-linear-to-br from-[#7d808b] via-[#a9acb3] to-[#84878f] pb-1 pl-2">
        <Ico w={32} h={30}>
          <path d="M4 1h24v28H1L1 5z" fill="#e7f3e2" stroke="#218a36" strokeWidth="1.500" />
          <path d="M20 3h7v10h-5M16 14l14 4v11l-16-3z" fill="#fff" stroke="#7bb87f" />
          <path d="M17 18l11 3M17 21l11 3M16 24l12 3" stroke="#4fa05a" fill="none" />
          <path d="M4 5l7-2l3 6l3-5h5l-5 9l5 10l-5-1l-4-6l-3 6H4l5-9z" fill="#1f8a38" />
        </Ico>
        Microsoft Excel - ...
      </button>
      <button className="ml-[3px] flex h-[37px] w-[159px] items-center gap-[3px] rounded-[2px] border border-[#a5a8b1] bg-linear-to-b from-[#858893] via-[#5e616f] to-[#656876] pb-1 pl-2">
        <Ico w={32} h={32}>
          <path d="M2 18C2 9 9 4 17 4c8 0 12 5 12 11c0 9-7 15-14 15c-5 0-5-3-4-5c1-3-2-3-4-3c-3 0-5-1-5-4z" fill="#bfe3f5" stroke="#5aa3cc" />
          <circle cx="8" cy="14" r="3" fill="#d44" /><circle cx="14" cy="9.500" r="3" fill="#6cbb3c" /><circle cx="21" cy="9" r="3" fill="#f5a623" /><circle cx="17" cy="16" r="2.500" fill="#3f6f94" /><circle cx="14" cy="25" r="2.500" fill="#3c86d4" />
          <path d="M27 7L20 31" stroke="#e8842a" strokeWidth="2.500" /><path d="M25 1h6l-1 7h-5z" fill="#c68a55" />
        </Ico>
        10 eu 1L - Paint
      </button>
      <span className="flex-1" />
      <span className="pb-1">PL</span>
      <Ico w={17} h={16} className="mb-1 ml-[9px]">
        <rect x="1" y="7" width="15" height="8" rx="1" fill="#d9dbdf" />
        <path d="M3 9.500h11M3 11.500h11" stroke="#555" strokeDasharray="1 1" /><path d="M5 13.500h7" stroke="#555" /><path d="M5 6c0-4 4-1 5-3s3 0 3-2" stroke="#b5b8bf" fill="none" />
      </Ico>
      <button aria-label="Pokaż ukryte ikony" className="ml-3">
        <Ico w={8} h={8}><path d="M0 6l4-4l4 4z" fill="#fff" /></Ico>
      </button>
      <Ico w={16} h={16} className="ml-4">
        <path d="M1.500 1v15" stroke="#fff" strokeWidth="1.500" /><path d="M3 2h6v2h6l-2 3l1 2H8V8H3z" fill="#fff" />
      </Ico>
      <Ico w={17} h={14} className="ml-2">
        <path d="M1 11h2v3H1zM4 9h2v5H4zM7 7h2v7H7zM10 5h2v9h-2zM13 2h2v12h-2z" fill="#fff" />
      </Ico>
      <Ico w={16} h={14} className="ml-[7px]">
        <path d="M0 5h3l4-4v12l-4-4H0z" fill="#fff" /><path d="M9 4.500c1 1.500 1 3.500 0 5M11 3c2 2.500 2 5.500 0 8M13 1c3 3.500 3 8.500 0 12" stroke="#fff" fill="none" />
      </Ico>
      <div className="ml-[15px] w-[62px] text-center leading-[17px]">
        <div>09:13</div>
        <div>2011-06-19</div>
      </div>
      <button aria-label="Pokaż pulpit" className="ml-[10px] h-full w-[14px] border border-[#8d909b] bg-linear-to-br from-[#858893] to-[#3f4250]" />
    </div>
  );
}

/* ---------- window ---------- */
export default function App() {
  return (
    <div className="flex h-screen flex-col overflow-hidden bg-[#e3e5e8] font-['Open_Sans',sans-serif] text-[11px]">
      <div className="h-[48px] shrink-0 bg-[linear-gradient(180deg,transparent_10%,rgba(255,255,255,.35)_40%,#eceded_75%,#f3f4f4),linear-gradient(90deg,#a3a3ab,#8f8f99_15%,#6f7080_27%,#8d8d9a_33%,#6b6c7d_42%,#a4a4b0_52%,#9a9ba7_62%,#74768a_70%,#83859a_82%,#75778a_90%,#b5b5bb)]">
        <div className="flex h-6">
          <div className="flex flex-1 items-center gap-1 pl-[2px]">
            <Ico>
              <rect x="0.500" y="0.500" width="15" height="15" fill="#e8f4e4" stroke="#2f8a3c" />
              <path d="M3 3h3l2 3l2-3h3L9.500 8l4 5h-3L8 10l-2.500 3h-3l4-5z" fill="#1c7a30" />
            </Ico>
            <span className="h-[13px] w-px bg-[#6b6b75]" />
            <button aria-label="Zapisz" className="ml-0.5">
              <Ico w={15} h={15}>
                <path d="M0.500 0.500h13v13h-12l-1-1z" fill="#3d62d3" stroke="#2a3fa0" /><rect x="3" y="1" width="9" height="6" fill="#f4f6fb" /><rect x="4" y="9" width="7" height="5" fill="#d6dae6" /><rect x="5" y="10" width="2" height="3" fill="#2a3fa0" />
              </Ico>
            </button>
            <button aria-label="Cofnij" className="ml-0.5 flex items-center gap-1">
              <Ico w={15} h={15}><path d="M3 6c4-5 10-3 9 2c-0.500 2.500-2 4-4 5" fill="none" stroke="#2f62c4" strokeWidth="2.500" /><path d="M1 1v7h7z" fill="#2f62c4" /></Ico>
              <Down className="!border-t-black" />
            </button>
            <button aria-label="Ponów" className="ml-0.5 flex items-center gap-1 opacity-50">
              <Ico w={15} h={15}><path d="M11 6C7 1 1 3 2 8c0.500 2.500 2 4 4 5" fill="none" stroke="#888" strokeWidth="2.500" /><path d="M13 1v7H6z" fill="#888" /></Ico>
              <Down />
            </button>
            <span className="ml-0.5 h-[13px] w-px bg-[#6b6b75]" />
            <button aria-label="Dostosuj" className="flex w-2 flex-col items-center gap-px">
              <span className="h-px w-[7px] bg-black" />
              <Down className="!border-t-black" />
            </button>
          </div>
          <h1 className="text-[11px] leading-6 whitespace-pre text-black [text-shadow:0_0_6px_white,0_0_6px_white]">EUROUSD  -  Microsoft Excel</h1>
          <div className="flex flex-1 justify-end pr-[2px]">
            <div className="flex h-[18px] overflow-hidden rounded-b-[4px] border border-t-0 border-[#4f505c] shadow-[0_0_0_1px_rgba(255,255,255,.5)]">
              <button aria-label="Minimalizuj" className="flex w-[28px] items-end justify-center border-r border-[#4f505c] bg-linear-to-b from-[#b9b9c0] to-[#8c8d98] pb-1">
                <span className="h-1 w-3 border border-[#4a4a55] bg-white" />
              </button>
              <button aria-label="Przywróć" className="flex w-[27px] items-center justify-center border-r border-[#4f505c] bg-linear-to-b from-[#b9b9c0] to-[#8c8d98]">
                <Ico w={12} h={12}><path d="M3.500 1.500h7v7M1.500 3.500h7v7h-7z" fill="none" stroke="#4a4a55" strokeWidth="2.400" /><path d="M3.500 1.500h7v7M1.500 3.500h7v7h-7z" fill="none" stroke="#fff" strokeWidth="1.300" /></Ico>
              </button>
              <button aria-label="Zamknij" className="flex w-[47px] items-center justify-center bg-linear-to-b from-[#d9917f] via-[#bf3f25] to-[#cf5a3a]">
                <Ico w={12} h={12}><path d="M2 2l8 8M10 2l-8 8" stroke="#55333a" strokeWidth="4" /><path d="M2 2l8 8M10 2l-8 8" stroke="#fff" strokeWidth="2.400" /></Ico>
              </button>
            </div>
          </div>
        </div>
        <nav className="flex h-6 items-stretch text-[#444]">
          <button className="w-[56px] rounded-t-[3px] border border-[#1d6a22] bg-linear-to-b from-[#2f8a35] via-[#1f7a28] to-[#55b53c] text-white">Plik</button>
          <button className="ml-1 w-[118px] rounded-t-[3px] border border-b-0 border-[#b4b8be] bg-white">Narzędzia główne</button>
          <button className="w-[90px]">Wstawianie</button>
          <button className="w-[91px]">Układ strony</button>
          <button className="w-[71px]">Formuły</button>
          <button className="w-[53px]">Dane</button>
          <button className="w-[75px]">Recenzja</button>
          <button className="w-[60px]">Widok</button>
          <span className="flex-1" />
          <div className="flex items-center gap-[9px] pr-1">
            <button aria-label="Minimalizuj wstążkę"><Ico w={10} h={8}><path d="M1 5l4-4l4 4v2L5 4.500L1 7z" fill="#fff" stroke="#555" strokeWidth="0.900" /></Ico></button>
            <button aria-label="Pomoc" className="flex h-4 w-4 items-center justify-center rounded-full border border-[#2b57a5] bg-linear-to-b from-[#7fa9e6] to-[#3468c0] text-[12px] leading-none font-bold text-white">?</button>
            <button aria-label="Minimalizuj okno"><Ico w={12} h={6}><rect x="1" y="1" width="10" height="3.500" rx="1" fill="#fff" stroke="#555" /></Ico></button>
            <button aria-label="Przywróć okno"><Ico w={13} h={12}><path d="M4.500 1.500h7v5h-7zM1.500 4.500h7v6h-7zM4 7.500h2v1H4z" fill="#fff" stroke="#555" /></Ico></button>
            <button aria-label="Zamknij okno"><Ico w={12} h={10}><path d="M1 1h3l2 2l2-2h3L8 5l3 4H8L6 7L4 9H1l3-4z" fill="#fff" stroke="#555" /></Ico></button>
          </div>
        </nav>
      </div>

      <Ribbon />

      <div className="mt-[3px] flex h-[23px] shrink-0 border-y border-[#9a9fa6] bg-white text-[12px] text-black">
        <label className="relative flex w-[160px] items-center">
          <input aria-label="Pole nazwy" defaultValue="A2" className="w-[142px] bg-transparent text-center outline-none" />
          <span className="absolute right-1.5 border-x-4 border-t-4 border-x-transparent border-t-[#333]" />
        </label>
        <div className="flex w-[85px] items-center justify-between rounded-l-full border-r border-l border-[#9a9fa6] bg-[#dfe2e7] pr-1.5 pl-1">
          <span className="h-[9px] w-[9px] rounded-full bg-linear-to-b from-[#b9bdc4] to-[#f3f4f6]" />
          <button aria-label="Wstaw funkcję" className="font-['Liberation_Serif'] text-[14px] leading-none font-bold text-[#333] italic">
            f<span className="text-[11px]">x</span>
          </button>
        </div>
        <input aria-label="Pasek formuły" defaultValue="50%-250-16" className="min-w-0 flex-1 px-2 text-[13px] outline-none" />
        <button aria-label="Rozwiń pasek formuły" className="flex w-4 items-center justify-center border-l border-[#9a9fa6] bg-[#e3e6ea]">
          <Ico w={8} h={6}><path d="M1 1l3 3l3-3" fill="none" stroke="#444" strokeWidth="1.800" /></Ico>
        </button>
      </div>
      <div className="h-[2px] shrink-0 border-b border-[#9a9fa6]" />

      <Sheet />
      <SheetTabs />
      <StatusBar />
      <Taskbar />
    </div>
  );
}
